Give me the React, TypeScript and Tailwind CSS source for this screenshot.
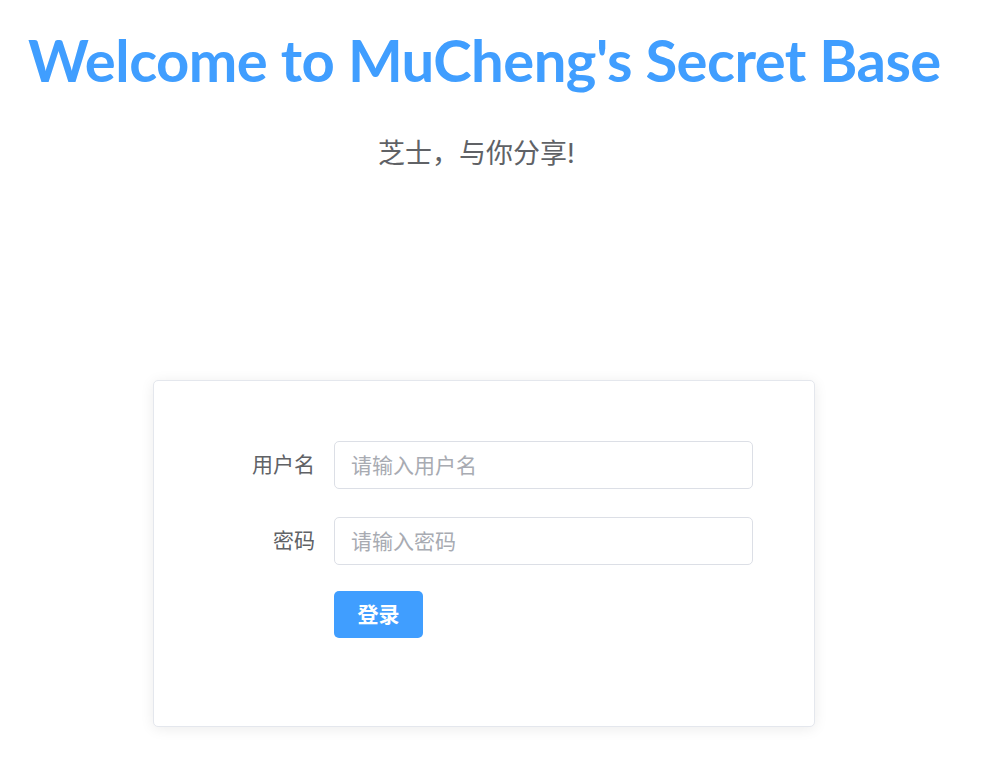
import { useState } from 'react'

export default function App() {
  const [username, setUsername] = useState('')
  const [password, setPassword] = useState('')

  return (
    <div className="min-h-screen bg-white font-['Inter','Noto_Sans_CJK_SC',sans-serif]">
      {/* Header */}
      <h1 className="pt-[22px] pl-[28px] font-['Lato','Noto_Sans_CJK_SC',sans-serif] text-[58px] leading-[76px] font-bold tracking-[-0.55px] text-[#409eff] whitespace-nowrap">
        Welcome to MuCheng's Secret Base
      </h1>
      <p className="mt-[40px] text-center text-[27px] leading-[32px] text-[#606266] pr-[28px]">
        芝士，与你分享!
      </p>

      {/* Login card */}
      <div className="mt-[210px] w-[662px] h-[347px] ml-[153px] bg-white border border-[#e4e7ed] rounded-[5px] shadow-[0_2px_14px_rgba(0,0,0,0.08)] pt-[60px] pr-[61px]">
        <div className="flex items-center mb-[28px]">
          <label className="w-[180px] pr-[19px] text-right text-[21px] text-[#606266]">用户名</label>
          <input
            value={username}
            onChange={(e) => setUsername(e.target.value)}
            placeholder="请输入用户名"
            className="flex-1 h-[48px] px-[16px] border border-[#dcdfe6] rounded-[5px] text-[21px] text-[#606266] placeholder:text-[#a8abb2] outline-none"
          />
        </div>
        <div className="flex items-center mb-[26px]">
          <label className="w-[180px] pr-[19px] text-right text-[21px] text-[#606266]">密码</label>
          <input
            type="password"
            value={password}
            onChange={(e) => setPassword(e.target.value)}
            placeholder="请输入密码"
            className="flex-1 h-[48px] px-[16px] border border-[#dcdfe6] rounded-[5px] text-[21px] text-[#606266] placeholder:text-[#a8abb2] outline-none"
          />
        </div>
        <div className="pl-[180px]">
          <button className="w-[89px] h-[47px] rounded-[5px] bg-[#409eff] text-white text-[21px] font-bold">
            登录
          </button>
        </div>
      </div>
    </div>
  )
}
